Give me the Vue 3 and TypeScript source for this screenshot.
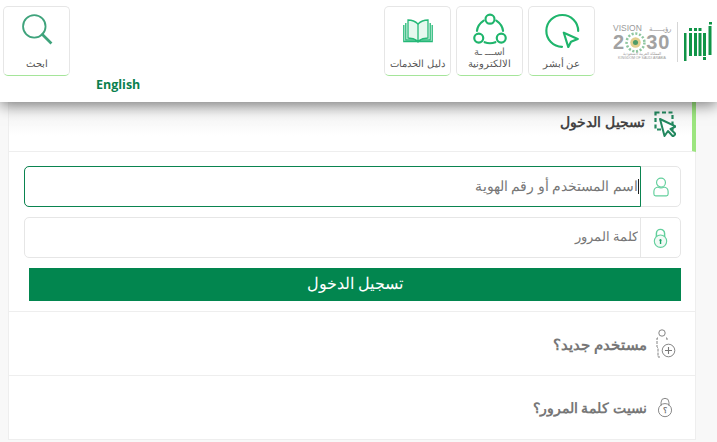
<template>
  <div class="page" dir="rtl">
    <header class="topbar">
      <div class="brand">
        <svg class="absher" viewBox="0 0 28 40" width="28" height="40">
          <g fill="#0f9447">
            <rect x="24.500" y="4" width="3" height="29" />
            <rect x="25" y="0" width="3" height="2.500" />
            <rect x="19" y="11" width="3" height="23" />
            <rect x="19" y="35" width="3" height="3" />
            <rect x="14.500" y="11" width="3" height="23" />
            <rect x="10" y="11" width="3" height="23" />
            <rect x="5" y="11" width="3" height="23" />
            <rect x="0" y="11" width="2.500" height="28" />
            <rect x="14.500" y="6" width="3" height="3" />
            <rect x="10" y="6" width="3" height="3" />
            <rect x="5" y="6" width="3" height="3" />
          </g>
        </svg>
        <div class="brand-sep"></div>
        <div class="vision" dir="ltr">
          <div class="vision-top">VISION <span>رؤيـــــة</span></div>
          <div class="vision-year">
            2<svg viewBox="0 0 20 20" width="21" height="21">
              <circle cx="10" cy="10" r="8.5" fill="none" stroke="#8fc7a0" stroke-width="2.4" stroke-dasharray="2 1.6" />
              <circle cx="10" cy="10" r="5" fill="#e3cf8e" />
              <circle cx="10" cy="10" r="2.4" fill="#4f9c68" />
            </svg>30
          </div>
          <div class="vision-ar">المملكة العربية السعودية</div>
          <div class="vision-en">KINGDOM OF SAUDI ARABIA</div>
        </div>
      </div>

      <a class="tile">
        <svg class="tile-icon" viewBox="0 0 40 40" width="36" height="36">
          <path d="M20 38.700A17.700 17.700 0 1 1 38 21" fill="none" stroke="#1fb56c" stroke-width="2.400" stroke-linecap="round" />
          <path d="M22 23l15.500 7-7.500 3-3 6z" fill="#fff" stroke="#1fb56c" stroke-width="2.400" stroke-linejoin="round" />
        </svg>
        <span class="tile-label">عن أبشر</span>
      </a>

      <a class="tile">
        <svg class="tile-icon" viewBox="0 0 40 40" width="36" height="36">
          <g fill="none" stroke="#1fb56c" stroke-width="2.400" stroke-linecap="round">
            <circle cx="20" cy="8" r="5" />
            <circle cx="7.500" cy="29" r="5" />
            <circle cx="32.500" cy="29" r="5" />
            <path d="M13 9.500C8.500 12.500 6 16.500 5.500 21" />
            <path d="M27 9.500c4.500 3 7 7 7.500 11.500" />
            <path d="M14 33.500c4 1.600 8 1.600 12 0" />
          </g>
        </svg>
        <span class="tile-clip">اســـ   ـة</span>
        <span class="tile-label">الالكترونية</span>
      </a>

      <a class="tile">
        <svg class="tile-icon book" viewBox="0 0 30 25" width="30" height="25">
          <g fill="none" stroke="#25b877" stroke-width="1.300">
            <path d="M15 5C12 2 8 1 5 1v18c4 0 7 1 10 3 3-2 6-3 10-3V1c-3 0-7 1-10 4z" fill="#e6f8ef" />
            <path d="M15 5v17" />
            <path d="M2.800 4v17h9l3.200 2 3.200-2h9V4" />
            <path d="M.8 6v16.500h28.400V6" />
          </g>
        </svg>
        <span class="tile-label">دليل الخدمات</span>
      </a>

      <div class="spacer"></div>

      <div class="lang-col">
        <a class="lang">English</a>
      </div>

      <a class="tile search">
        <svg class="tile-icon" viewBox="0 0 40 40" width="36" height="36">
          <circle cx="17" cy="16" r="12.500" fill="none" stroke="#3fa37c" stroke-width="2" />
          <path d="M26 25l9 9" stroke="#3fa37c" stroke-width="3" stroke-linecap="square" />
        </svg>
        <span class="tile-label">ابحث</span>
      </a>
    </header>

    <main class="panel">
      <div class="login-head">
        <svg viewBox="0 0 22 26" width="22" height="26">
          <rect x="1.500" y="1.500" width="17" height="17" fill="none" stroke="#23885f" stroke-width="2.200" stroke-dasharray="4 2.500" />
          <path d="M6 8l4.500 17 3.500-5 5 5.500 2.500-2.500-5-5 5.500-2.500z" fill="#fff" stroke="#23885f" stroke-width="2" stroke-linejoin="round" />
        </svg>
        <h2>تسجيل الدخول</h2>
      </div>

      <form class="login-form" @submit.prevent>
        <div class="field focused">
          <span class="addon">
            <svg viewBox="0 0 18 22" width="16" height="20">
              <g fill="none" stroke="#62cf9c" stroke-width="1.300">
                <circle cx="9" cy="6" r="5" />
                <path d="M5.500 11C3 11.500 1 13.500 1 16v3a2 2 0 0 0 2 2h12a2 2 0 0 0 2-2v-3c0-2.500-2-4.500-4.500-5-2.300 1.400-4.700 1.400-7 0z" />
              </g>
            </svg>
          </span>
          <div class="input-wrap">
            <span class="caret"></span>
            <input type="text" placeholder="اسم المستخدم أو رقم الهوية" />
          </div>
        </div>
        <div class="field">
          <span class="addon">
            <svg viewBox="0 0 16 22" width="15" height="20">
              <g fill="none" stroke="#62cf9c" stroke-width="1.200">
                <path d="M3.500 10V6a4.500 4.500 0 0 1 9 0v4" stroke-width="1.600" />
                <circle cx="8" cy="14.500" r="6.800" fill="#f0faf5" />
              </g>
              <path d="M6.700 13.500a1.300 1.300 0 1 1 2.100 1v3H7.300v-3a1.300 1.300 0 0 1-.6-1z" fill="#18a566" />
            </svg>
          </span>
          <div class="input-wrap">
            <input type="password" placeholder="كلمة المرور" />
          </div>
        </div>
        <button class="submit" type="submit">تسجيل الدخول</button>
      </form>

      <a class="link-row">
        <span class="link-icon">
          <svg viewBox="0 0 22 30" width="22" height="30">
            <g fill="none" stroke="#777" stroke-width="0.900">
              <circle cx="8" cy="4" r="3.200" />
              <path d="M4 9H3v9l1 1v9h2M12 9h1v3" stroke-dasharray="3 1" />
              <circle cx="14.500" cy="21.500" r="6.300" />
              <path d="M14.500 18v7M11 21.500h7" stroke-width="1.100" />
            </g>
          </svg>
        </span>
        <span class="new-user">مستخدم جديد؟</span>
      </a>
      <a class="link-row">
        <span class="link-icon">
          <svg viewBox="0 0 18 24" width="16" height="21">
            <g fill="none" stroke="#777" stroke-width="1">
              <path d="M4.500 10V6a4.500 4.500 0 0 1 9 0v4" />
              <circle cx="9" cy="15" r="7.500" />
            </g>
            <text x="9" y="18.500" class="lock-q" text-anchor="middle">؟</text>
          </svg>
        </span>
        <span>نسيت كلمة المرور؟</span>
      </a>
    </main>
  </div>
</template>

<script setup lang="ts">
</script>

<style>
html,
body {
  margin: 0;
  background: #f8f8f8;
}
</style>

<style scoped>
.page {
  width: 717px;
  height: 442px;
  overflow: hidden;
  font-family: "Noto Sans", sans-serif;
  background: #f8f8f8;
}

.topbar {
  position: relative;
  z-index: 2;
  display: flex;
  align-items: flex-start;
  gap: 5px;
  height: 102px;
  padding: 6px 5px 0 3px;
  box-sizing: border-box;
  background: #fff;
  box-shadow: 0 3px 14px rgba(0, 0, 0, 0.5);
}

.brand {
  display: flex;
  align-items: center;
  gap: 6px;
  width: 104px;
  height: 40px;
  margin-top: 16px;
  margin-left: 8px;
}

.absher {
  flex: none;
}

.brand-sep {
  flex: none;
  width: 1px;
  height: 40px;
  background: #d6d6d6;
}

.vision {
  color: #9a9a9a;
  line-height: 1;
}

.vision-top {
  display: flex;
  justify-content: space-between;
  align-items: center;
  font-family: "Liberation Sans", sans-serif;
  font-size: 8.500px;
  width: 58px;
  height: 10px;
}

.vision-top span {
  font-family: "Noto Sans", sans-serif;
  font-size: 7px;
}

.vision-year {
  display: flex;
  align-items: center;
  font-family: "Liberation Sans", sans-serif;
  font-size: 20px;
  font-weight: 700;
  letter-spacing: 1px;
  height: 18px;
  margin-bottom: 1px;
  color: #a2a2a2;
}

.vision-ar {
  font-size: 4px;
  text-align: center;
  margin-top: 1px;
}

.vision-en {
  font-family: "Liberation Sans", sans-serif;
  font-size: 3.500px;
  text-align: center;
  margin-top: 1px;
  white-space: nowrap;
}

.tile {
  position: relative;
  flex: none;
  display: flex;
  flex-direction: column;
  align-items: center;
  width: 67px;
  height: 70px;
  box-sizing: border-box;
  padding-top: 5px;
  background: #fff;
  border: 1px solid #e6e6e6;
  border-bottom-color: #a5e59a;
  border-radius: 5px;
}

.tile-icon {
  display: block;
  flex: none;
}

.tile-icon.book {
  margin: 7px 0 4px;
}

/* what's left of the upper label line under the icon */
.tile-clip {
  position: absolute;
  top: 37px;
  left: 0;
  right: 0;
  font-size: 10px;
  line-height: 14px;
  text-align: center;
  white-space: pre;
  color: #666;
}

.tile-label {
  margin-top: 7px;
  font-size: 10px;
  line-height: 16px;
  color: #555;
  white-space: nowrap;
}

.spacer {
  flex: 1;
}

.lang-col {
  align-self: stretch;
  padding: 66px 0 0 21px;
}

.lang {
  font-family: "Open Sans", "Noto Sans", sans-serif;
  font-size: 12.500px;
  font-weight: 700;
  color: #0b7f4e;
}

.panel {
  width: 688px;
  margin-right: 21px;
  box-sizing: border-box;
  background: #fff;
  border-left: 1px solid #eee;
  border-right: 1px solid #eee;
}

.login-head {
  display: flex;
  align-items: center;
  gap: 9px;
  height: 50px;
  padding: 0 16px 5px 0;
  box-sizing: border-box;
  background: linear-gradient(#f0f0f0, #fff 70%);
  border-bottom: 1px solid #eee;
  border-right: 4px solid #9ce57f;
  margin-right: -1px;
}

.login-head h2 {
  margin: 0;
  padding-bottom: 6px;
  font-size: 14px;
  font-weight: 700;
  color: #444;
}

.login-form {
  display: flex;
  flex-direction: column;
  gap: 10px;
  padding: 14px 14px 10px 15px;
  border-bottom: 1px solid #eee;
}

.field {
  display: flex;
  height: 41px;
  box-sizing: border-box;
  border: 1px solid #e6e6e6;
  border-radius: 5px;
  background: #fff;
}

.addon {
  flex: none;
  display: flex;
  align-items: center;
  justify-content: center;
  width: 39px;
  border-left: 1px solid #e6e6e6;
}

.input-wrap {
  position: relative;
  flex: 1;
  display: flex;
  border-radius: 5px 0 0 5px;
}

.field.focused .input-wrap {
  margin: -1px 0 -1px -1px;
  border: 1px solid #0a8450;
}

.field.focused .addon {
  border-left: 0;
}

.input-wrap input {
  flex: 1;
  width: 100%;
  padding: 0 2px 3px;
  border: 0;
  outline: 0;
  background: transparent;
  font: 12.500px "Noto Sans", sans-serif;
  color: #666;
}

.field.focused input {
  font-size: 13.800px;
}

.input-wrap input::placeholder {
  color: #777;
  opacity: 1;
}

.caret {
  position: absolute;
  top: 12px;
  right: 1px;
  width: 1px;
  height: 15px;
  background: #222;
}

.submit {
  height: 33px;
  margin-left: 5px;
  padding: 0 0 3px;
  border: 0;
  background: #02864f;
  color: #fff;
  font: 16px "Noto Sans", sans-serif;
}

.link-row {
  display: flex;
  align-items: center;
  gap: 7px;
  height: 64px;
  padding-right: 19px;
  box-sizing: border-box;
  border-bottom: 1px solid #eee;
  font-size: 14.200px;
  font-weight: 700;
  color: #777;
}

.new-user {
  font-size: 14.800px;
}

.link-icon {
  flex: none;
  display: flex;
  justify-content: center;
  width: 22px;
}

.lock-q {
  font-size: 9px;
  fill: #777;
}
</style>
